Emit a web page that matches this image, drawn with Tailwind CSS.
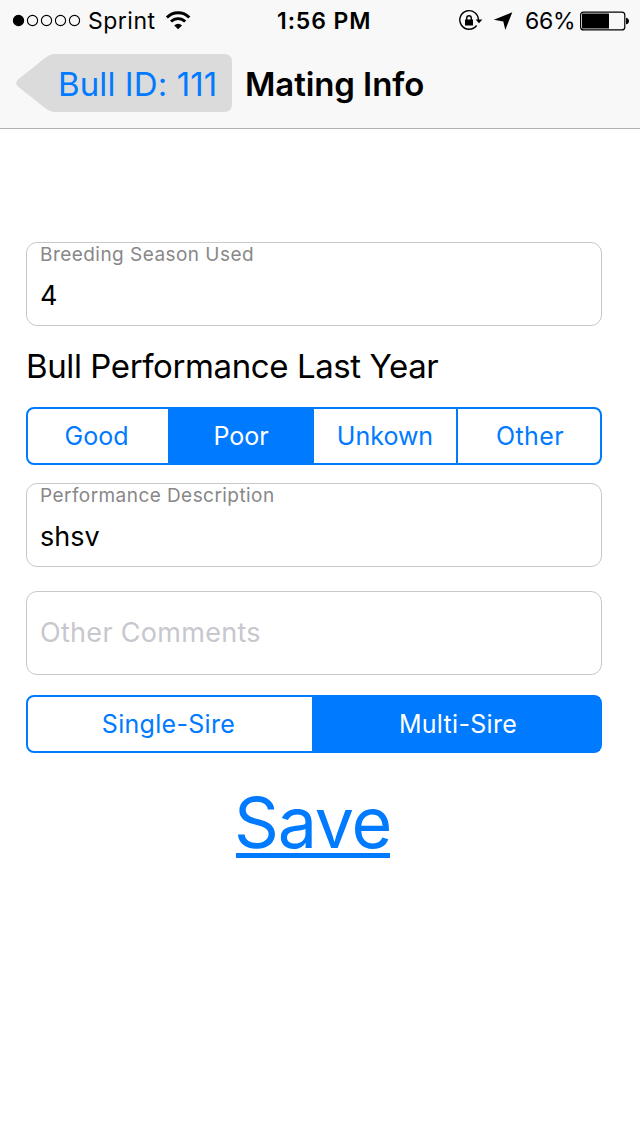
<!DOCTYPE html>
<html lang="en">
<head>
<meta charset="utf-8">
<title>Mating Info</title>
<script src="https://cdn.jsdelivr.net/npm/@tailwindcss/browser@4"></script>
</head>
<body class="flex h-[1136px] w-[640px] flex-col overflow-hidden bg-white font-['Inter',sans-serif] text-black">
  <header class="h-[129px] shrink-0 border-b border-[#b2b2b2] bg-[#f8f8f8]">
    <div class="flex h-[41px] items-center">
      <svg class="ml-3 h-[15px] w-[70px]" viewBox="0 0 70 15" fill="none" stroke="#000" stroke-width="1.1">
        <circle cx="6.5" cy="7.5" r="5.1" fill="#000"/><circle cx="20.5" cy="7.5" r="5.1"/><circle cx="34.5" cy="7.5" r="5.1"/><circle cx="48.5" cy="7.5" r="5.1"/><circle cx="62.5" cy="7.5" r="5.1"/>
      </svg>
      <div class="w-[83px] pt-[2px] pl-[6px] text-[23px] leading-[41px] tracking-[0.5px]">Sprint</div>
      <svg class="h-[20px] w-[26px]" viewBox="0 0.7 26 20" fill="none" stroke="#000" stroke-width="2.9">
        <path d="M1.9 7.2a15.6 15.6 0 0 1 22.4 0"/><path d="M6 11.3a9.9 9.9 0 0 1 14.2 0"/><path d="M13.1 19l-3.9-3.9a5.5 5.5 0 0 1 7.8 0z" fill="#000" stroke="none"/>
      </svg>
      <div class="ml-[86px] w-[179px] pt-[2px] text-[23px] leading-[41px] font-semibold tracking-[0.9px]">1:56 PM</div>
      <svg class="h-[24px] w-[60px]" viewBox="456 8.5 60 24">
        <path d="M476.6 25A9.3 9.3 0 1 1 478.4 20" fill="none" stroke="#000" stroke-width="1.4"/>
        <path d="M475.6 18.9h6.8l-3.4 3.8z"/><rect x="465" y="19" width="8" height="6"/><path d="M466.7 19.400v-1.500a2.300 2.600 0 0 1 4.600 0v1.500" fill="none" stroke="#000" stroke-width="1.4"/>
        <path d="M512.3 11.800l-7 17.600-2-8.500-9.500-1.600z"/>
      </svg>
      <div class="ml-[9px] w-[55px] pt-[2px] text-[23px] leading-[41px] tracking-[-0.3px]">66%</div>
      <svg class="h-[20px] w-[50px]" viewBox="580 10.5 50 20"><rect x="580.6" y="11.6" width="44.2" height="17.800" rx="3" fill="none" stroke="#000" stroke-width="1.2"/><rect x="582" y="13" width="27" height="15" rx=".5"/><path d="M626 17.200c4 .5 4 6.100 0 6.600z"/></svg>
    </div>
    <div class="flex h-[84px] items-center">
      <div class="relative ml-4 h-[58px] w-[216px] pl-[42px]">
        <svg class="absolute inset-0 h-[58px] w-[216px]" viewBox="0 0 216 58"><path d="M39 0H208Q216 0 216 8V50Q216 58 208 58H39Q34 58 29 54L2 32.5Q-1.500 29 2 25.500L29 4Q34 0 39 0Z" fill="#dbdbdb"/></svg>
        <a class="relative text-[33px] leading-[60px] tracking-[0.1px] whitespace-nowrap text-[#007aff]">Bull ID: 111</a>
      </div>
      <h1 class="pt-px pl-[13px] text-[33px] leading-[58px] font-semibold tracking-[-0.1px] whitespace-nowrap">Mating Info</h1>
    </div>
  </header>
  <main class="flex flex-col pt-[113px] pr-[38px] pl-[26px]">
    <div class="h-[84px] rounded-[11px] border border-[#c8c8c9] pl-[13px]">
      <div class="text-[19px] leading-[23px] tracking-[0.46px] text-[#888]">Breeding Season Used</div>
      <div class="pt-[10px] text-[27px] leading-[39px]">4</div>
    </div>
    <h2 class="h-[81px] text-[33px] leading-[81px] tracking-[-0.4px] whitespace-nowrap">Bull Performance Last Year</h2>
    <div class="flex h-[58px] rounded-lg border-2 border-[#007aff] text-center text-[25px] leading-[54px] text-[#007aff]">
      <div class="w-[140px] pr-[3px]">Good</div>
      <div class="w-[146px] bg-[#007aff] text-white">Poor</div>
      <div class="w-[144px] border-r-2 border-[#007aff]">Unkown</div>
      <div class="w-[142px] pl-[2px] tracking-[0.4px]">Other</div>
    </div>
    <div class="mt-[18px] h-[84px] rounded-[11px] border border-[#c8c8c9] pl-[13px]">
      <div class="text-[19px] leading-[23px] tracking-[0.44px] text-[#888]">Performance Description</div>
      <div class="pt-[10px] text-[27px] leading-[39px]">shsv</div>
    </div>
    <div class="mt-6 h-[84px] rounded-[11px] border border-[#c8c8c9] pl-[13px] text-[27px] leading-[81px] tracking-[0.3px] text-[#c7c7cd]">Other Comments</div>
    <div class="mt-5 flex h-[58px] rounded-lg border-2 border-[#007aff] text-center text-[25px] leading-[54px] tracking-[0.3px] text-[#007aff]">
      <div class="w-[284px] pr-[3px]">Single-Sire</div>
      <div class="w-[288px] bg-[#007aff] pl-[4px] text-white">Multi-Sire</div>
    </div>
    <div class="mt-[30px] ml-[210px] h-[75px] w-[154px] border-b-[5px] border-[#007aff] text-[70px] leading-[80px] text-[#007aff]"><span class="-ml-[2px] tracking-[-1.2px]">Save</span></div>
  </main>
</body>
</html>
